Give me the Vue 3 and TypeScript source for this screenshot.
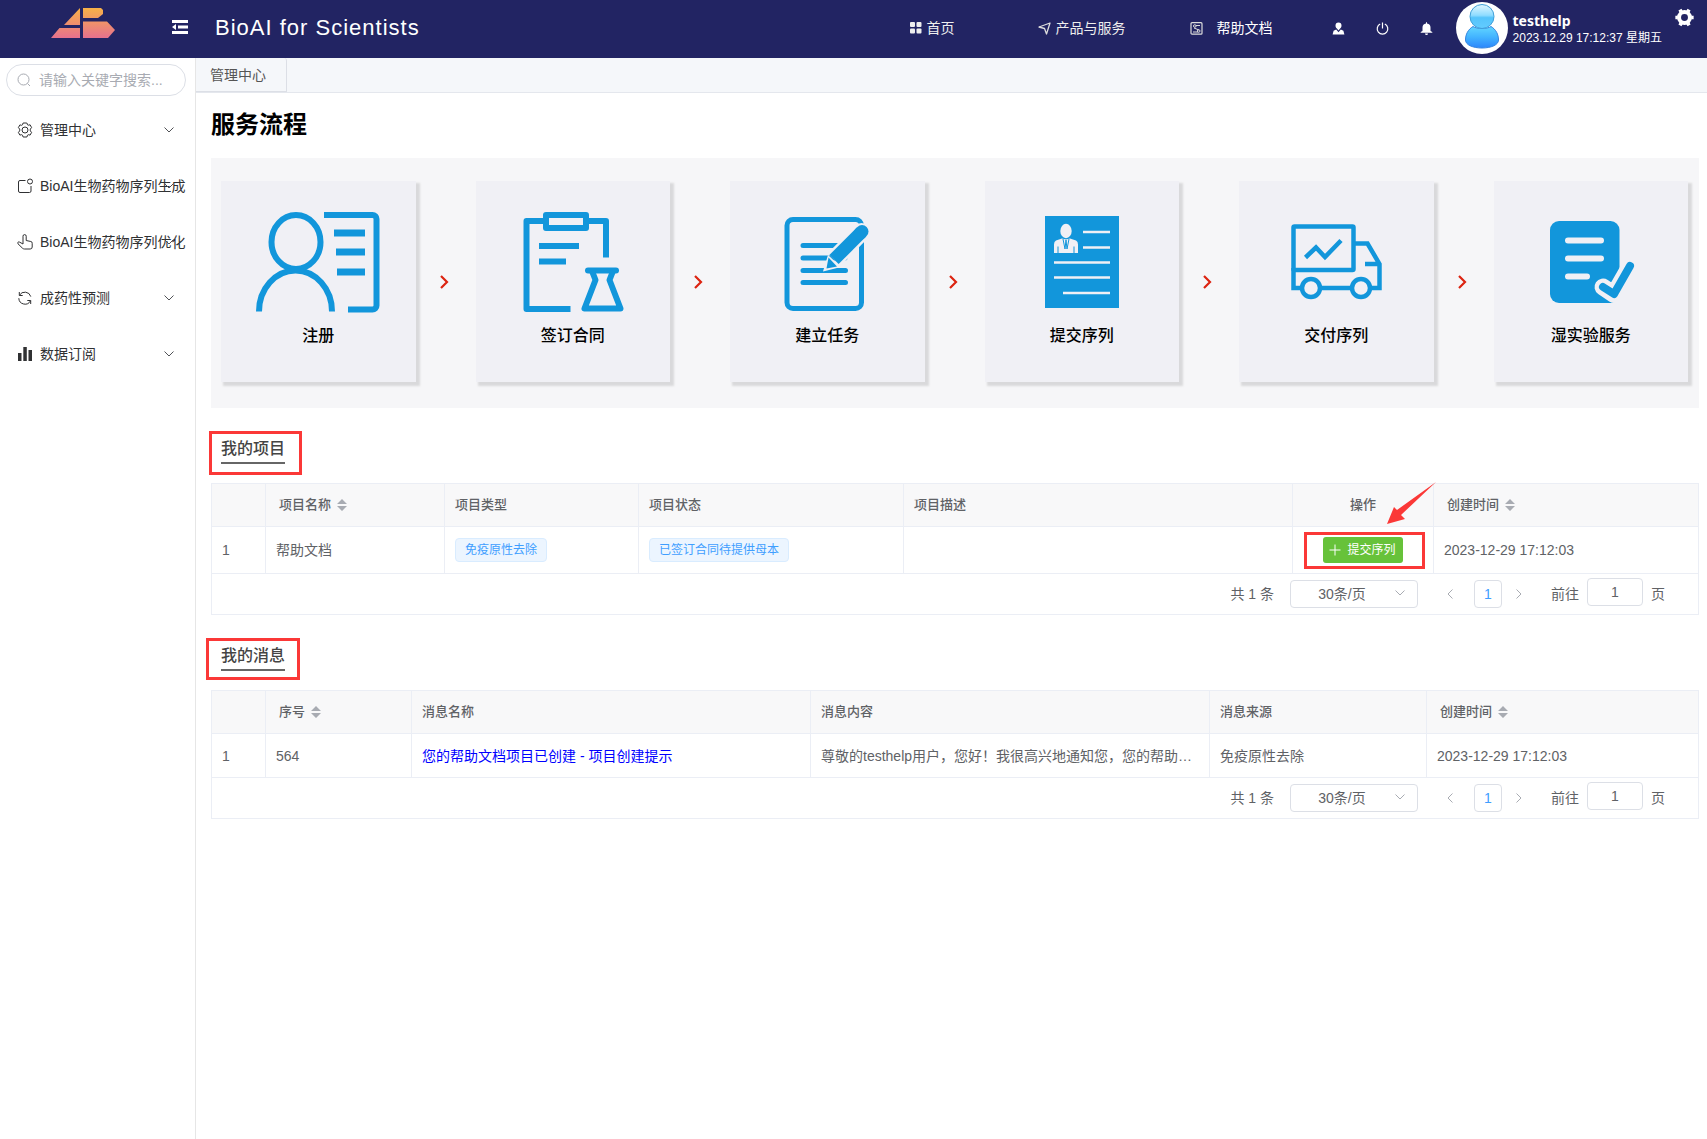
<script setup lang="ts">
import { ref } from 'vue'

interface MenuItem {
  label: string
  paths: string[]
  filled?: boolean
}

interface Column {
  label: string
  width?: number
  sortable?: boolean
  center?: boolean
}

const gearPath =
  'M9.4 1l.5 0 .6 1.8.7.4 1.9-.4L14.6 5.6l-1.3 1.5v1.8l1.3 1.5-1.5 2.7-1.9-.4-.7.5L9.9 15H6.1l-.6-1.8-.8-.5-1.8.4-1.5-2.7 1.3-1.5V7.1L1.4 5.6l1.5-2.7 1.8.4.8-.5L6.1 1z'

const menu: MenuItem[] = [
  { label: '管理中心', paths: [gearPath, 'M8 5a3 3 0 1 0 0 6a3 3 0 0 0 0-6z'] },
  {
    label: 'BioAI生物药物序列生成',
    paths: ['M8.5 2.5H3a1.5 1.5 0 0 0-1.5 1.5V13A1.5 1.5 0 0 0 3 14.500H12.500A1.5 1.5 0 0 0 14 13V8', 'M13 1a2.500 2.500 0 1 0 0 5a2.500 2.500 0 0 0 0-5z'],
  },
  {
    label: 'BioAI生物药物序列优化',
    paths: ['M6 10V2.200a1.600 1.600 0 0 1 3.200 0V6.500l4.600 1a1.700 1.700 0 0 1 1.400 1.900V13a2 2 0 0 1-2 2H7.500a3 3 0 0 1-2-.8L1 9.800c-.9-1.100.3-2.400 1.500-1.700L6 10'],
  },
  {
    label: '成药性预测',
    paths: ['M2.500 5.200A6.200 6.200 0 0 1 13.800 6.600', 'M2.300 2v3.500h3.400', 'M13.500 10.800A6.200 6.200 0 0 1 1.800 8.200', 'M13.700 14v-3.500h-3.400'],
  },
  { label: '数据订阅', paths: ['M1 7h3.500v8H1z', 'M6.300 1h3.500v14H6.300z', 'M11.500 4H15v11h-3.500z'], filled: true },
]

const steps: string[] = ['注册', '签订合同', '建立任务', '提交序列', '交付序列', '湿实验服务']

const projectColumns: Column[] = [
  { label: '', width: 54 },
  { label: '项目名称', width: 179, sortable: true },
  { label: '项目类型', width: 194 },
  { label: '项目状态', width: 265 },
  { label: '项目描述' },
  { label: '操作', width: 141, center: true },
  { label: '创建时间', width: 264, sortable: true },
]

const messageColumns: Column[] = [
  { label: '', width: 54 },
  { label: '序号', width: 146, sortable: true },
  { label: '消息名称' },
  { label: '消息内容' },
  { label: '消息来源', width: 217 },
  { label: '创建时间', width: 271, sortable: true },
]

const keyword = ref('')
const pageSize = ref('30')
const pagers = ref([{ id: 'projects', page: '1' }, { id: 'messages', page: '1' }])
</script>

<template>
  <div class="app">
    <header class="topbar">
      <svg class="logo" width="64" height="30" viewBox="0 0 64 30" aria-hidden="true">
        <defs>
          <linearGradient id="logoFill" x1="0" y1="0" x2="0" y2="30" gradientUnits="userSpaceOnUse">
            <stop offset="0" stop-color="#f6b148" />
            <stop offset="1" stop-color="#e6718e" />
          </linearGradient>
        </defs>
        <path fill="url(#logoFill)" d="M29 0V17H13zM8.500 20H29V30H0zM32 0H50L52 2V6L47 10H32zM32 13.500H56L64 22 57 30H32z" />
      </svg>
      <button class="icon-btn fold" aria-label="折叠菜单">
        <svg width="18" height="16" viewBox="0 0 18 16" fill="#fff"><path d="M1 1h16v3H1zM7 6.500h10v3H7zM1 12h16v3H1zM1 8l4-3v6z" /></svg>
      </button>
      <h1 class="brand">BioAI for Scientists</h1>

      <nav class="nav">
        <a href="#" class="home">
          <svg width="12" height="12" viewBox="0 0 12 12" fill="#eee"><rect width="5" height="5" rx="1" /><rect x="6.500" width="5" height="5" rx="1" /><rect y="6.500" width="5" height="5" rx="1" /><rect x="6.500" y="6.500" width="5" height="5" rx="1" /></svg>
          首页
        </a>
        <a href="#" class="products">
          <svg width="13" height="13" viewBox="0 0 13 13" fill="none" stroke="#ddd" stroke-width="1.300" stroke-linejoin="round"><path d="M12 1L1 5l5.500 1.500L8.500 12z" /></svg>
          产品与服务
        </a>
        <a href="#" class="docs">
          <svg width="13" height="13" viewBox="0 0 13 13" fill="none" stroke="#ddd"><rect x="1" y=".7" width="11" height="11.500" rx="1" stroke-width="1.200" /><circle cx="4.800" cy="4" r="1.300" /><path d="M6 3.500h4M4 6l5 2M3 10h5" /><circle cx="8.700" cy="9" r="1.300" /></svg>
          帮助文档
        </a>
      </nav>

      <div class="tools">
        <button class="icon-btn" aria-label="用户">
          <svg width="13" height="13" viewBox="0 0 13 13" fill="#fff"><path d="M6.500.5a3 3 0 0 1 3 3c0 1.200-.5 2.400-1.400 3.100l-1.600 2-1.600-2C4 5.900 3.500 4.700 3.500 3.500a3 3 0 0 1 3-3zM4.200 7.500l2.300 2.800 2.300-2.800 2.600 1.200 1 3.800H.6l1-3.800z" /></svg>
        </button>
        <button class="icon-btn" aria-label="退出">
          <svg width="13" height="13" viewBox="0 0 13 13" fill="none" stroke="#fff" stroke-width="1.200"><path d="M6.500.5v6M4.200 2a5.300 5.300 0 1 0 4.600 0" /></svg>
        </button>
        <button class="icon-btn" aria-label="通知">
          <svg width="13" height="13" viewBox="0 0 13 13" fill="#fff"><path d="M6 .3h1V1.500A4 4 0 0 1 10.500 5.500V9l1.800 1v.8H.7V10l1.800-1V5.500A4 4 0 0 1 6 1.500zM5 11.500h3a1.500 1.500 0 0 1-3 0z" /></svg>
        </button>
      </div>

      <svg class="avatar" width="52" height="52" viewBox="0 0 52 52" aria-hidden="true">
        <defs>
          <linearGradient id="avatarHead" x1="0" y1="0" x2="0" y2="1">
            <stop offset="0" stop-color="#e2f7ff" />
            <stop offset=".45" stop-color="#8fdcff" />
            <stop offset=".55" stop-color="#55c4fb" />
            <stop offset="1" stop-color="#63ccff" />
          </linearGradient>
          <linearGradient id="avatarBody" x1="0" y1="0" x2="0" y2="1">
            <stop offset="0" stop-color="#62d6ff" />
            <stop offset=".5" stop-color="#42b3ff" />
            <stop offset="1" stop-color="#2c86fb" />
          </linearGradient>
        </defs>
        <circle cx="26" cy="26" r="26" fill="#fff" />
        <path d="M17 24.500c3 2.500 15 2.500 18 0 5 3 7.500 8 7.500 13.500 0 5-7.500 8-16.500 8s-16.500-3-16.500-8c0-5.500 2.500-10.500 7.500-13.500z" fill="url(#avatarBody)" stroke="#3585e0" />
        <circle cx="26" cy="14.500" r="12" fill="url(#avatarHead)" stroke="#3f9fd8" />
      </svg>
      <div class="user">
        <strong>testhelp</strong>
        <time>2023.12.29 17:12:37 星期五</time>
      </div>
      <button class="icon-btn gear" aria-label="设置">
        <svg width="19" height="19" viewBox="0 0 16 16" fill="none" stroke="#fff">
          <circle cx="8" cy="8" r="4.600" stroke-width="3.400" />
          <g stroke-width="3"><path d="M.3 8h2M13.700 8h2M4.150 1.350l1 1.700M10.850 12.950l1 1.700M11.850 1.350l-1 1.700M5.150 12.950l-1 1.700" /></g>
        </svg>
      </button>
    </header>

    <div class="body">
      <aside class="sidebar">
        <label class="search">
          <svg width="14" height="14" viewBox="0 0 14 14" fill="none" stroke="#a8abb2"><circle cx="6.500" cy="6.500" r="5.500" /><path d="M10.500 10.500L13 13" /></svg>
          <input v-model="keyword" type="text" aria-label="搜索菜单" placeholder="请输入关键字搜索..." />
        </label>
        <nav class="menu">
          <a v-for="item in menu" :key="item.label" href="#" class="menu-item">
            <svg width="16" height="16" viewBox="0 0 16 16" :fill="item.filled ? '#303133' : 'none'" :stroke="item.filled ? 'none' : '#303133'" stroke-linejoin="round">
              <path v-for="d in item.paths" :key="d" :d="d" />
            </svg>
            <span>{{ item.label }}</span>
            <svg class="caret" width="10" height="6" viewBox="0 0 10 6" fill="none" stroke="#505256"><path d="M.5.5L5 5l4.500-4.500" /></svg>
          </a>
        </nav>
      </aside>

      <main class="main">
        <div class="tabs"><button class="tab">管理中心</button></div>

        <div class="content">
          <h2 class="title">服务流程</h2>

          <div class="flow">
            <template v-for="(step, i) in steps" :key="step">
              <div v-if="i > 0" class="next">
                <svg width="9" height="14" viewBox="0 0 9 14" fill="none" stroke="#dc2411" stroke-width="2.200"><path d="M1 1l6 6-6 6" /></svg>
              </div>
              <div class="card">
                <svg width="130" height="115" viewBox="0 0 130 115" fill="none" stroke="#1296db" stroke-width="6">
                  <g v-if="i === 0">
                    <ellipse cx="43" cy="38" rx="24.500" ry="27" />
                    <path d="M6 107.500A36.500 41 0 0 1 79 107.500M71 11H119.500a4 4 0 0 1 4 4V101.500a4 4 0 0 1-4 4H95" />
                    <path d="M81 29h31M83 48h29M84 68h28" stroke-width="7" />
                  </g>
                  <g v-else-if="i === 1" stroke-linejoin="round">
                    <path d="M36 17H18.500V105H62.500M80 17H98V53.500M38 11H78V24H38z" />
                    <path d="M31 42H71M31 57.500H58" stroke-linejoin="miter" />
                    <path d="M80 66.500H108" stroke-linecap="round" />
                    <path d="M84 67L87.500 76 76.500 104.500H112.500L101.500 76 105 67" />
                  </g>
                  <g v-else-if="i === 2" stroke-width="5" stroke-linecap="round">
                    <rect x="25" y="15.500" width="74.500" height="89" rx="6" />
                    <path d="M41 41.500H83M41 54H83M41 66.500H83.500M41 78.500H83.500" />
                    <path d="M72 55.500L99.500 28" stroke="#f0f0f5" stroke-width="18" stroke-linecap="butt" />
                    <path d="M99.500 28V28" stroke="#f0f0f5" stroke-width="18" />
                    <path d="M66 51L61 67.500 79 63z" fill="#f0f0f5" stroke="none" />
                    <path d="M72 55.500L99.500 28" stroke-width="13" stroke-linecap="butt" />
                    <path d="M98 29.500L100 27.500" stroke-width="13" />
                    <path d="M66.500 53.500L64.500 64.500 75 62.500z" fill="#1296db" stroke="none" />
                  </g>
                  <g v-else-if="i === 3" stroke="#f0f0f5" stroke-width="2.500">
                    <path d="M28 12H102V104H28z" fill="#1296db" stroke="none" />
                    <path d="M66 28H93M66 43.500H93M37 58.500H93M37 73.500H93M46 89H93" />
                    <ellipse cx="49" cy="27" rx="5.700" ry="7.200" fill="#f0f0f5" stroke="none" />
                    <path d="M45 34.500l-6 2q-2 1-2 4V49h24V40.500q0-3-2-4l-6-2-4 1z" fill="#f0f0f5" stroke="none" />
                    <path d="M46 35l2 10 1-9 1 9 2-10M41 42.500V49M57 42.500V49" stroke="#1296db" stroke-width="1" />
                  </g>
                  <g v-else-if="i === 4" stroke-width="4.500">
                    <rect x="22.500" y="22.500" width="60" height="43.500" rx="1" />
                    <path d="M22.500 64V84H31M49 84H81M99 84H108.500V60L96.500 39.500H84M94 60H108M34.500 53.500L45 43.500 54 53 70 36.500" />
                    <circle cx="40" cy="84" r="9" /><circle cx="90" cy="84" r="9" />
                  </g>
                  <g v-else stroke-linecap="round" stroke-linejoin="round">
                    <rect x="24" y="17" width="69.500" height="82" rx="9" fill="#1296db" stroke="none" />
                    <path d="M42 36.500H75M42 54.500H75M42 72.500H61" stroke="#f0f0f5" />
                    <path d="M77 83L88 90.500 104 62.500" stroke="#f0f0f5" stroke-width="17" />
                    <path d="M77 83L88 90 104 62" stroke-width="8" />
                  </g>
                </svg>
                <p>{{ step }}</p>
              </div>
            </template>
          </div>

          <section v-for="(pager, s) in pagers" :key="pager.id" class="section">
            <h3 class="section-title">
              {{ s === 0 ? '我的项目' : '我的消息' }}
              <span class="mark" :class="pager.id"></span>
            </h3>

            <div class="grid">
              <table :class="pager.id">
                <colgroup>
                  <col v-for="(c, i) in s === 0 ? projectColumns : messageColumns" :key="i" :style="c.width ? { width: c.width + 'px' } : {}" />
                </colgroup>
                <thead>
                  <tr>
                    <th v-for="(c, i) in s === 0 ? projectColumns : messageColumns" :key="i" :class="{ sortable: c.sortable, center: c.center }">
                      {{ c.label }}
                      <svg v-if="c.sortable" class="sort" width="10" height="12" viewBox="0 0 10 12" fill="#a8abb2"><path d="M0 5l5-5 5 5zM0 7h10l-5 5z" /></svg>
                    </th>
                  </tr>
                </thead>
                <tbody>
                  <tr v-if="s === 0">
                    <td class="index">1</td>
                    <td>帮助文档</td>
                    <td><span class="tag">免疫原性去除</span></td>
                    <td><span class="tag">已签订合同待提供母本</span></td>
                    <td></td>
                    <td class="center">
                      <div class="action">
                        <button class="submit">
                          <svg width="12" height="12" viewBox="0 0 12 12" stroke="#fff"><path d="M6 .5v11M.5 6h11" /></svg>
                          提交序列
                        </button>
                        <span class="mark button-mark"></span>
                        <svg class="pointer" width="50" height="43" viewBox="0 0 50 43" fill="#fb3837" aria-hidden="true"><path d="M0 42L7 25l3 3L49 0 14 33l4 4z" /></svg>
                      </div>
                    </td>
                    <td>2023-12-29 17:12:03</td>
                  </tr>
                  <tr v-else>
                    <td class="index">1</td>
                    <td>564</td>
                    <td><a href="#" class="message-link">您的帮助文档项目已创建 - 项目创建提示</a></td>
                    <td>尊敬的testhelp用户，您好！我很高兴地通知您，您的帮助…</td>
                    <td>免疫原性去除</td>
                    <td>2023-12-29 17:12:03</td>
                  </tr>
                </tbody>
              </table>

              <div class="pager">
                <span>共 1 条</span>
                <div class="size">
                  <select v-model="pageSize" aria-label="每页条数"><option value="30">30条/页</option></select>
                  <svg width="10" height="6" viewBox="0 0 10 6" fill="none" stroke="#a8abb2"><path d="M.5.5L5 5l4.500-4.500" /></svg>
                </div>
                <div class="pages">
                  <button class="icon-btn" aria-label="上一页"><svg width="6" height="10" viewBox="0 0 6 10" fill="none" stroke="#a8abb2"><path d="M5.500.5L1 5l4.500 4.500" /></svg></button>
                  <button class="page">1</button>
                  <button class="icon-btn" aria-label="下一页"><svg width="6" height="10" viewBox="0 0 6 10" fill="none" stroke="#a8abb2"><path d="M.5.5L5 5 .5 9.500" /></svg></button>
                </div>
                <label class="jump">前往<input v-model="pager.page" type="text" />页</label>
              </div>
            </div>
          </section>
        </div>
      </main>
    </div>
  </div>
</template>

<style>
body {
  margin: 0;
}
</style>

<style scoped>
.app,
.app * {
  box-sizing: border-box;
}

.app {
  display: flex;
  flex-direction: column;
  min-height: 100vh;
  font-family: "Liberation Sans", "Noto Sans CJK SC", sans-serif;
  font-size: 14px;
  line-height: 20px;
  color: #606266;
  background: #fff;
}

svg {
  display: block;
  flex: none;
}

button,
input,
select {
  font: inherit;
  color: inherit;
}

a {
  text-decoration: none;
}

.icon-btn {
  padding: 0;
  border: 0;
  background: none;
}

/* Top bar */
.topbar {
  display: flex;
  align-items: center;
  height: 58px;
  padding: 0 13px 2px 51px;
  color: #fff;
  background: #222463;
}

.logo {
  margin-bottom: 10px;
}

.fold {
  margin: 0 26px 2px 56px;
}

.brand {
  margin: 0 auto 0 0;
  font-size: 22px;
  font-weight: 400;
  line-height: 28px;
  letter-spacing: 1px;
}

.nav,
.tools {
  display: flex;
}

.nav a {
  display: flex;
  align-items: center;
  color: #eee;
}

.nav .home {
  gap: 5px;
  margin-right: 83px;
}

.nav .products {
  gap: 5px;
  margin-right: 64px;
}

.nav .docs {
  gap: 14px;
  margin-right: 59px;
  color: #fff;
}

.tools {
  gap: 31px;
  margin-right: 23px;
}

.user {
  display: flex;
  flex-direction: column;
  margin: 0 13px 0 5px;
}

.user strong {
  font-family: "Noto Sans", sans-serif;
  line-height: 19px;
}

.user time {
  font-size: 12px;
  line-height: 16px;
}

.gear {
  align-self: flex-start;
  margin-top: 8px;
}

/* Sidebar */
.body {
  display: flex;
  flex: 1;
}

.sidebar {
  flex: none;
  width: 196px;
  padding: 6px 0;
  border-right: 1px solid #e6e6e6;
}

.search {
  display: flex;
  align-items: center;
  gap: 8px;
  height: 32px;
  margin: 0 9px 6px 6px;
  padding: 0 10px;
  border: 1px solid #dcdfe6;
  border-radius: 16px;
}

.search input {
  flex: 1;
  min-width: 0;
  padding: 0;
  border: 0;
  outline: 0;
  background: none;
}

.search input::placeholder {
  color: #a8abb2;
}

.menu-item {
  position: relative;
  display: flex;
  align-items: center;
  gap: 7px;
  height: 56px;
  padding-left: 17px;
  color: #303133;
  white-space: nowrap;
}

.caret {
  position: absolute;
  top: 25px;
  right: 21px;
}

/* Main area */
.main {
  flex: 1;
  min-width: 0;
}

.tabs {
  height: 35px;
  border-bottom: 1px solid #e4e7ed;
  background: #f5f7fa;
}

.tab {
  height: 34px;
  padding: 0 20px 0 14px;
  border: 0;
  border-right: 1px solid #dcdfe6;
  border-bottom: 1px solid #dcdfe6;
  border-top-right-radius: 3px;
  color: #555;
  background: none;
}

.content {
  padding: 14px 8px 40px 15px;
}

.title {
  margin: 0 0 15px;
  font-size: 24px;
  line-height: 36px;
  color: #000;
}

.flow {
  display: flex;
  align-items: center;
  height: 250px;
  padding: 0 11px 3px 10px;
  background: #f6f6f8;
}

.card {
  display: flex;
  flex: 1;
  flex-direction: column;
  align-items: center;
  height: 201px;
  padding-top: 23px;
  background: #f0f0f5;
  box-shadow: 3px 3px 2px 1px #d9d9db;
}

.card p {
  margin: 5px 0 0;
  font-size: 16px;
  font-weight: 500;
  line-height: 24px;
  color: #000;
}

.next {
  display: flex;
  flex: none;
  width: 60px;
  padding-left: 24px;
}

/* Data sections */
.section {
  padding-top: 28px;
}

.section-title {
  position: relative;
  width: fit-content;
  margin: 0 0 19px 10px;
  border-bottom: 2px solid #666;
  font-size: 16px;
  font-weight: 500;
  line-height: 26px;
  color: #444;
}

.mark {
  position: absolute;
  border: 3px solid #fb3837;
  pointer-events: none;
}

.mark.projects {
  inset: -5px -17px -13px -12px;
}

.mark.messages {
  inset: -5px -15px -11px -15px;
}

.button-mark {
  inset: -5px -22px -6px -19px;
}

.grid {
  border: 1px solid #ebeef5;
}

table {
  width: 100%;
  border-collapse: separate;
  border-spacing: 0;
  table-layout: fixed;
}

th,
td {
  height: 44px;
  padding: 0 10px;
  border-right: 1px solid #ebeef5;
  border-bottom: 1px solid #ebeef5;
  text-align: left;
}

th:last-child,
td:last-child {
  border-right: 0;
}

th {
  height: 43px;
  font-size: 13px;
  font-weight: 500;
  background: #f8f8f9;
}

th.sortable {
  padding-left: 13px;
}

th.center,
td.center {
  text-align: center;
}

td {
  overflow: hidden;
  text-overflow: ellipsis;
  white-space: nowrap;
}

td.center {
  overflow: visible;
}

table.projects td {
  height: 47px;
}

.sort {
  display: inline-block;
  margin-left: 2px;
  vertical-align: -2px;
}

.tag {
  display: inline-block;
  padding: 0 9px;
  border: 1px solid #d9ecff;
  border-radius: 4px;
  font-size: 12px;
  line-height: 22px;
  color: #409eff;
  background: #ecf5ff;
  vertical-align: middle;
}

.action {
  position: relative;
  display: inline-block;
  vertical-align: middle;
}

.submit {
  display: flex;
  align-items: center;
  gap: 6px;
  height: 26px;
  padding: 0 7px 0 6px;
  border: 0;
  border-radius: 3px;
  font-size: 12px;
  color: #fff;
  background: #67c23a;
}

.pointer {
  position: absolute;
  top: -55px;
  left: 64px;
}

.message-link {
  color: #00f;
}

.pager {
  display: flex;
  align-items: center;
  justify-content: flex-end;
  height: 40px;
  padding-right: 33px;
}

.size {
  position: relative;
  margin: 0 29px 0 16px;
}

.size select {
  display: block;
  width: 128px;
  height: 28px;
  padding: 0 32px 0 8px;
  border: 1px solid #dcdfe6;
  border-radius: 4px;
  text-align: center;
  text-align-last: center;
  background: #fff;
  appearance: none;
}

.size svg {
  position: absolute;
  top: 10px;
  right: 13px;
}

.pages {
  display: flex;
  align-items: center;
  gap: 14px;
  margin-right: 29px;
}

.pages .icon-btn {
  padding: 4px 0;
}

.page {
  width: 28px;
  height: 28px;
  margin-left: 7px;
  padding: 0;
  border: 1px solid #dcdfe6;
  border-radius: 4px;
  color: #409eff;
  background: #fff;
}

.jump {
  display: flex;
  align-items: center;
  gap: 8px;
}

.jump input {
  width: 56px;
  height: 28px;
  margin-bottom: 5px;
  padding: 0;
  border: 1px solid #dcdfe6;
  border-radius: 4px;
  text-align: center;
}
</style>
